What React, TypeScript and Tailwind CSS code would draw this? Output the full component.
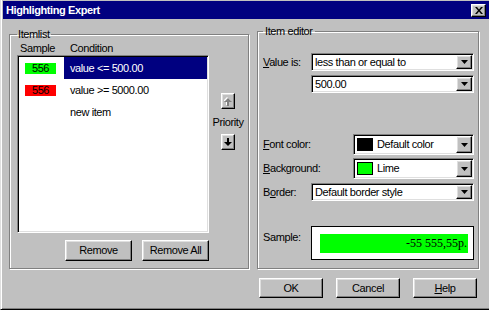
import React from "react";

const raised =
  "border border-t-white border-l-white border-r-black border-b-black shadow-[inset_-1px_-1px_0_#808080,inset_1px_1px_0_#dfdfdf]";
const sunken =
  "border border-t-[#808080] border-l-[#808080] border-r-white border-b-white shadow-[inset_1px_1px_0_#000,inset_-1px_-1px_0_#dfdfdf]";
const etched = "border border-[#808080] shadow-[inset_1px_1px_0_#fff,1px_1px_0_#fff]";

function DropArrow() {
  return (
    <svg width="7" height="4" viewBox="0 0 7 4">
      <path d="M0 0h7L3.5 4z" fill="#000" />
    </svg>
  );
}

function Combo({ children, tall }: { children: React.ReactNode; tall?: boolean }) {
  return (
    <div className={`${sunken} ${tall ? "h-[21px]" : "h-[18px]"} flex-1 bg-white flex p-[1px]`}>
      <div className="flex-1 flex items-center pl-[2px] overflow-hidden whitespace-nowrap">{children}</div>
      <div className={`${raised} w-[16px] bg-[#c0c0c0] flex items-center justify-center`}>
        <DropArrow />
      </div>
    </div>
  );
}

function Swatch({ color }: { color: string }) {
  return <span className={`inline-block w-[16px] h-[13px] border border-black mr-[4px] ${color}`} />;
}

function ArrowBtn({ up, disabled }: { up?: boolean; disabled?: boolean }) {
  const c = disabled ? "#808080" : "#000";
  return (
    <div className={`${raised} w-[14px] h-[16px] bg-[#c0c0c0] flex items-center justify-center`}>
      <svg width="8" height="9" viewBox="0 0 8 9" className={up ? "rotate-180" : ""}>
        {disabled && (
          <g transform="translate(1 1)">
            <path d="M3 0h2v5H3z M0 4h8L4 8z" fill="#fff" />
          </g>
        )}
        <path d="M3 0h2v5H3z M0 4h8L4 8z" fill={c} />
      </svg>
    </div>
  );
}

function Btn({ children, w }: { children: React.ReactNode; w: string }) {
  return (
    <div className={`${raised} ${w} bg-[#c0c0c0] flex items-center justify-center`}>{children}</div>
  );
}

const rows = [
  { swatch: "bg-[#00ff00]", text: "value <= 500.00", selected: true },
  { swatch: "bg-[#ff0000]", text: "value >= 5000.00", selected: false },
  { swatch: "", text: "new item", selected: false },
];

export default function App() {
  return (
    <div className="w-[489px] h-[313px] bg-white overflow-hidden font-['Liberation_Sans',Arial,sans-serif] text-[11px] tracking-[-0.4px] text-black leading-[13px]">
      <div className="h-[310px] bg-[#c0c0c0] border-l border-b border-l-[#dfdfdf] border-b-black shadow-[inset_1px_0_0_#fff,inset_0_-1px_0_#808080] flex flex-col">
        {/* title bar */}
        <div className="mt-[1px] ml-[2px] h-[18px] bg-[#000080] flex items-center justify-between pl-[3px] pr-[3px]">
          <span className="text-white font-bold text-[11px]">Highlighting Expert</span>
          <div className={`${raised} w-[15px] h-[13px] bg-[#c0c0c0] flex items-center justify-center`}>
            <svg width="8" height="7" viewBox="0 0 8 7">
              <path d="M0 0h2l2 2.5L6 0h2L5 3.5 8 7H6L4 4.5 2 7H0l3-3.5z" fill="#000" />
            </svg>
          </div>
        </div>

        <div className="flex items-start px-[8px] gap-[8px]">
          {/* Itemlist */}
          <fieldset className={`${etched} mt-[9px] w-[240px] h-[241px] pl-[7px] pr-[1px]`}>
            <legend className="px-[1px] leading-[13px]">Itemlist</legend>
            <div className="flex">
              <div className="w-[192px] flex flex-col">
                <div className="h-[14px] flex items-center">
                  <span className="w-[53px] pl-[3px]">Sample</span>
                  <span>Condition</span>
                </div>
                <div className={`${sunken} bg-white h-[178px] p-[1px]`}>
                  {rows.map((r) => (
                    <div key={r.text} className="h-[22px] flex">
                      <div className="w-[45px] flex items-center">
                        {r.swatch && (
                          <span
                            className={`ml-[6px] w-[31px] h-[11px] leading-[11px] text-center ${r.swatch}`}
                          >
                            556
                          </span>
                        )}
                      </div>
                      <div
                        className={`flex-1 flex items-center pl-[6px] ${
                          r.selected ? "bg-[#000080] text-white" : ""
                        }`}
                      >
                        {r.text}
                      </div>
                    </div>
                  ))}
                </div>
                <div className="mt-[7px] flex justify-end gap-[10px]">
                  <Btn w="w-[67px] h-[21px]">Remove</Btn>
                  <Btn w="w-[67px] h-[21px]">Remove All</Btn>
                </div>
              </div>
              <div className="flex-1 flex flex-col items-center pt-[52px]">
                <ArrowBtn up disabled />
                <span className="mt-[7px]">Priority</span>
                <div className="mt-[5px]">
                  <ArrowBtn />
                </div>
              </div>
            </div>
          </fieldset>

          {/* Item editor */}
          <fieldset className={`${etched} mt-[6px] w-[222px] h-[244px] pl-[5px] pr-[4px]`}>
            <legend className="px-[2px] leading-[13px]">Item editor</legend>
            <div className="flex flex-col">
              <div className="mt-[15px] flex items-center">
                <span className="w-[48px]">
                  <u>V</u>alue is:
                </span>
                <Combo>less than or equal to</Combo>
              </div>
              <div className="mt-[4px] flex pl-[48px]">
                <Combo>500.00</Combo>
              </div>
              <div className="mt-[41px] flex items-center">
                <span className="w-[90px]">
                  <u>F</u>ont color:
                </span>
                <Combo tall>
                  <Swatch color="bg-black" />
                  Default color
                </Combo>
              </div>
              <div className="mt-[3px] flex items-center">
                <span className="w-[90px]">
                  <u>B</u>ackground:
                </span>
                <Combo tall>
                  <Swatch color="bg-[#00ff00]" />
                  Lime
                </Combo>
              </div>
              <div className="mt-[4px] flex items-center">
                <span className="w-[48px]">
                  B<u>o</u>rder:
                </span>
                <Combo>Default border style</Combo>
              </div>
              <div className="mt-[25px] flex items-start">
                <span className="w-[48px] pt-[5px]">Sample:</span>
                <div className="flex-1 h-[34px] border border-black bg-white pt-[7px] pl-[8px] pr-[5px]">
                  <div className="h-[19px] bg-[#00ff00] flex items-center justify-end pr-[1px] font-['Liberation_Serif',serif] text-[12px] tracking-normal">
                    -55 555,55p.
                  </div>
                </div>
              </div>
            </div>
          </fieldset>
        </div>

        <div className="mt-[9px] flex justify-end pr-[12px] gap-[13px]">
          <Btn w="w-[64px] h-[20px]">OK</Btn>
          <Btn w="w-[64px] h-[20px]">Cancel</Btn>
          <Btn w="w-[64px] h-[20px]">
            <span>
              <u>H</u>elp
            </span>
          </Btn>
        </div>
      </div>
    </div>
  );
}
